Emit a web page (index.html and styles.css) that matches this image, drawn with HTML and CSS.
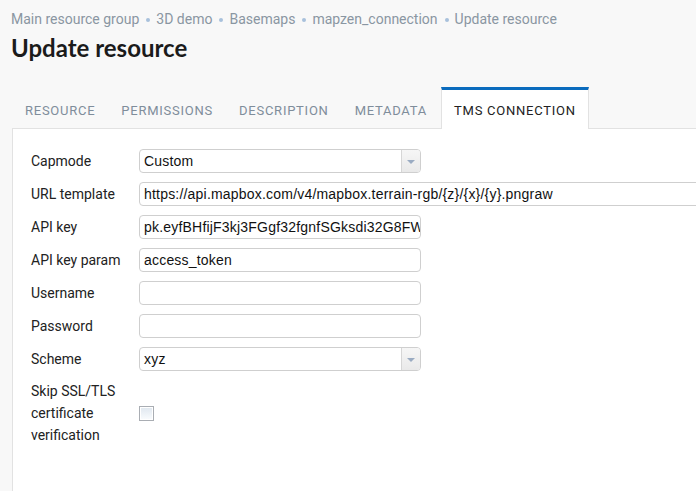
FILE: index.html
```html
<!DOCTYPE html>
<html>
<head>
<meta charset="utf-8">
<link rel="stylesheet" href="styles.css">
</head>
<body>
<div class="page">
  <nav class="crumbs">
    <span>Main resource group</span><span class="dot"></span>
    <span>3D demo</span><span class="dot"></span>
    <span>Basemaps</span><span class="dot"></span>
    <span>mapzen_connection</span><span class="dot"></span>
    <span>Update resource</span>
  </nav>
  <h1 class="title">Update resource</h1>
  <div class="tabs">
    <div class="tab">Resource</div>
    <div class="tab">Permissions</div>
    <div class="tab">Description</div>
    <div class="tab">Metadata</div>
    <div class="tab active">TMS connection</div>
  </div>
  <div class="panel">
    <div class="form">
      <div class="row">
        <label class="lbl">Capmode</label>
        <div class="select"><span class="val">Custom</span><span class="arrow"></span></div>
      </div>
      <div class="row">
        <label class="lbl">URL template</label>
        <div class="input wide">https://api.mapbox.com/v4/mapbox.terrain-rgb/{z}/{x}/{y}.pngraw</div>
      </div>
      <div class="row">
        <label class="lbl">API key</label>
        <div class="input">pk.eyfBHfijF3kj3FGgf32fgnfSGksdi32G8FWdsdfk3</div>
      </div>
      <div class="row">
        <label class="lbl">API key param</label>
        <div class="input">access_token</div>
      </div>
      <div class="row">
        <label class="lbl">Username</label>
        <div class="input"></div>
      </div>
      <div class="row">
        <label class="lbl">Password</label>
        <div class="input"></div>
      </div>
      <div class="row">
        <label class="lbl">Scheme</label>
        <div class="select"><span class="val">xyz</span><span class="arrow"></span></div>
      </div>
      <div class="row multi">
        <label class="lbl">Skip SSL/TLS certificate verification</label>
        <span class="check"></span>
      </div>
    </div>
  </div>
</div>
</body>
</html>
```

FILE: styles.css
```css
html, body {
  margin: 0;
  padding: 0;
  overflow: hidden;
  background: #f8f8f8;
}
.page {
  padding: 9px 0 0 12px;
  font-family: Roboto, "Liberation Sans", sans-serif;
  min-height: 482px;
  display: flex;
  flex-direction: column;
}
.crumbs {
  display: flex;
  align-items: center;
  font-size: 14px;
  line-height: 20px;
  color: #8a96a2;
  margin-left: -1px;
}
.dot {
  width: 4px;
  height: 4px;
  border-radius: 50%;
  background: #a8c1dc;
  margin: 1px 6px 0 7px;
}
.title {
  margin: 4px 0 0 -1px;
  font-family: Lato, sans-serif;
  font-weight: 700;
  font-size: 24px;
  line-height: 30px;
  color: #1b1b1b;
}
.tabs {
  display: flex;
  margin-top: 24px;
  height: 41px;
}
.tab {
  box-sizing: border-box;
  padding: 13px 13px 0;
  border-top: 3px solid transparent;
  font-size: 13px;
  line-height: 16px;
  letter-spacing: 0.75px;
  text-transform: uppercase;
  color: #7f8d9b;
}
.tab.active {
  background: #fff;
  color: #222;
  border-top-color: #0a6bbd;
  border-left: 1px solid #e2e2e2;
  border-right: 1px solid #e2e2e2;
  position: relative;
  z-index: 1;
  margin-bottom: -1px;
  padding: 13px 12px 0 12px;
  margin-left: 1px;
}
.panel {
  flex: 1;
  background: #fff;
  border-top: 1px solid #e2e2e2;
  border-left: 1px solid #e2e2e2;
  padding: 20px 0 0 18px;
}
.form {
  display: flex;
  flex-direction: column;
  gap: 9px;
}
.row {
  display: flex;
  align-items: center;
}
.lbl {
  width: 108px;
  flex: none;
  font-size: 14px;
  color: #222;
}
.input, .select {
  box-sizing: border-box;
  width: 282px;
  height: 24px;
  border: 1px solid #cfcfcf;
  border-radius: 4px;
  background: #fff;
  font-family: "Liberation Sans", Arial, sans-serif;
  font-size: 14px;
  letter-spacing: 0.2px;
  line-height: 22px;
  color: #111;
  padding: 0 0 0 4px;
  white-space: nowrap;
  overflow: hidden;
  flex: none;
}
.input.wide {
  width: 640px;
}
.select {
  display: flex;
  padding-left: 4px;
}
.select .val {
  flex: 1;
}
.arrow {
  width: 18px;
  border-left: 1px solid #d6d6d6;
  background: linear-gradient(#f6f6f6, #e9e9e9);
  position: relative;
}
.arrow::after {
  content: "";
  position: absolute;
  left: 5px;
  top: 10px;
  border-left: 4px solid transparent;
  border-right: 4px solid transparent;
  border-top: 4px solid #9aabc2;
}
.row.multi .lbl {
  line-height: 22px;
  width: 90px;
  margin-right: 18px;
}
.check {
  box-sizing: border-box;
  width: 15px;
  height: 15px;
  border: 1px solid #a9adb3;
  background: linear-gradient(#dfe7ef, #fafcfe);
  box-shadow: inset 0 0 0 1px #fff;
}
```
